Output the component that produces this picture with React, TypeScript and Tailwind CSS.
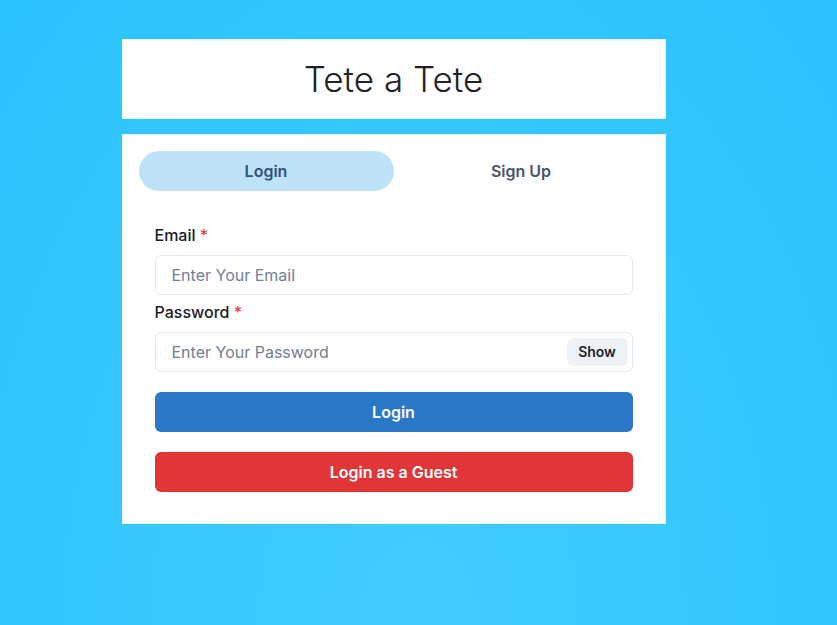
import React, { useState } from 'react';

const App: React.FC = () => {
  const [tab, setTab] = useState<'login' | 'signup'>('login');
  const [show, setShow] = useState(false);

  return (
    <div
      className="min-h-screen w-full bg-[radial-gradient(ellipse_at_50%_100%,#40cdff_0%,#37c8ff_45%,#2cc2fe_100%)] font-['Inter',sans-serif] text-[#1a202c]"
    >
      <div className="mx-auto w-[544px] -translate-x-[25px] pt-[39px]">
        {/* Header box */}
        <div className="flex h-[80px] items-center justify-center border border-[#e6f6fd] bg-white">
          <h1 className="text-[35px] font-light text-[#1f2329] font-['Inter',sans-serif]">
            Tete a Tete
          </h1>
        </div>

        {/* Auth box */}
        <div className="mt-[15px] border border-[#e6f6fd] bg-white p-4">
          <div className="flex">
            <button
              onClick={() => setTab('login')}
              className={`h-10 flex-1 rounded-full text-base font-semibold ${
                tab === 'login' ? 'bg-[#bee3f8] text-[#2c5282]' : 'text-[#4a5568]'
              }`}
            >
              Login
            </button>
            <button
              onClick={() => setTab('signup')}
              className={`h-10 flex-1 rounded-full text-base font-semibold ${
                tab === 'signup' ? 'bg-[#bee3f8] text-[#2c5282]' : 'text-[#4a5568]'
              }`}
            >
              Sign Up
            </button>
          </div>

          <div className="px-4 pt-8 pb-[15px]">
            <div className="flex flex-col">
              <label className="mb-2 text-base font-medium leading-6">
                Email <span className="text-[#e53e3e]">*</span>
              </label>
              <input
                placeholder="Enter Your Email"
                className="h-10 w-full rounded-md border border-[#e2e8f0] px-4 text-base outline-none placeholder:text-[#718096]"
              />

              <label className="mt-[5px] mb-2 text-base font-medium leading-6">
                Password <span className="text-[#e53e3e]">*</span>
              </label>
              <div className="relative">
                <input
                  type={show ? 'text' : 'password'}
                  placeholder="Enter Your Password"
                  className="h-10 w-full rounded-md border border-[#e2e8f0] pl-4 pr-20 text-base outline-none placeholder:text-[#718096]"
                />
                <button
                  onClick={() => setShow(!show)}
                  className="absolute right-[5px] top-[6px] h-7 w-[61px] rounded-md bg-[#edf2f7] text-sm font-semibold text-[#1a202c]"
                >
                  {show ? 'Hide' : 'Show'}
                </button>
              </div>

              <button className="mt-5 h-10 w-full rounded-md bg-[#2b78c8] text-base font-semibold text-white">
                Login
              </button>
              <button className="mt-5 h-10 w-full rounded-md bg-[#e23537] text-base font-semibold text-white">
                Login as a Guest
              </button>
            </div>
          </div>
        </div>
      </div>
    </div>
  );
};

export default App;
